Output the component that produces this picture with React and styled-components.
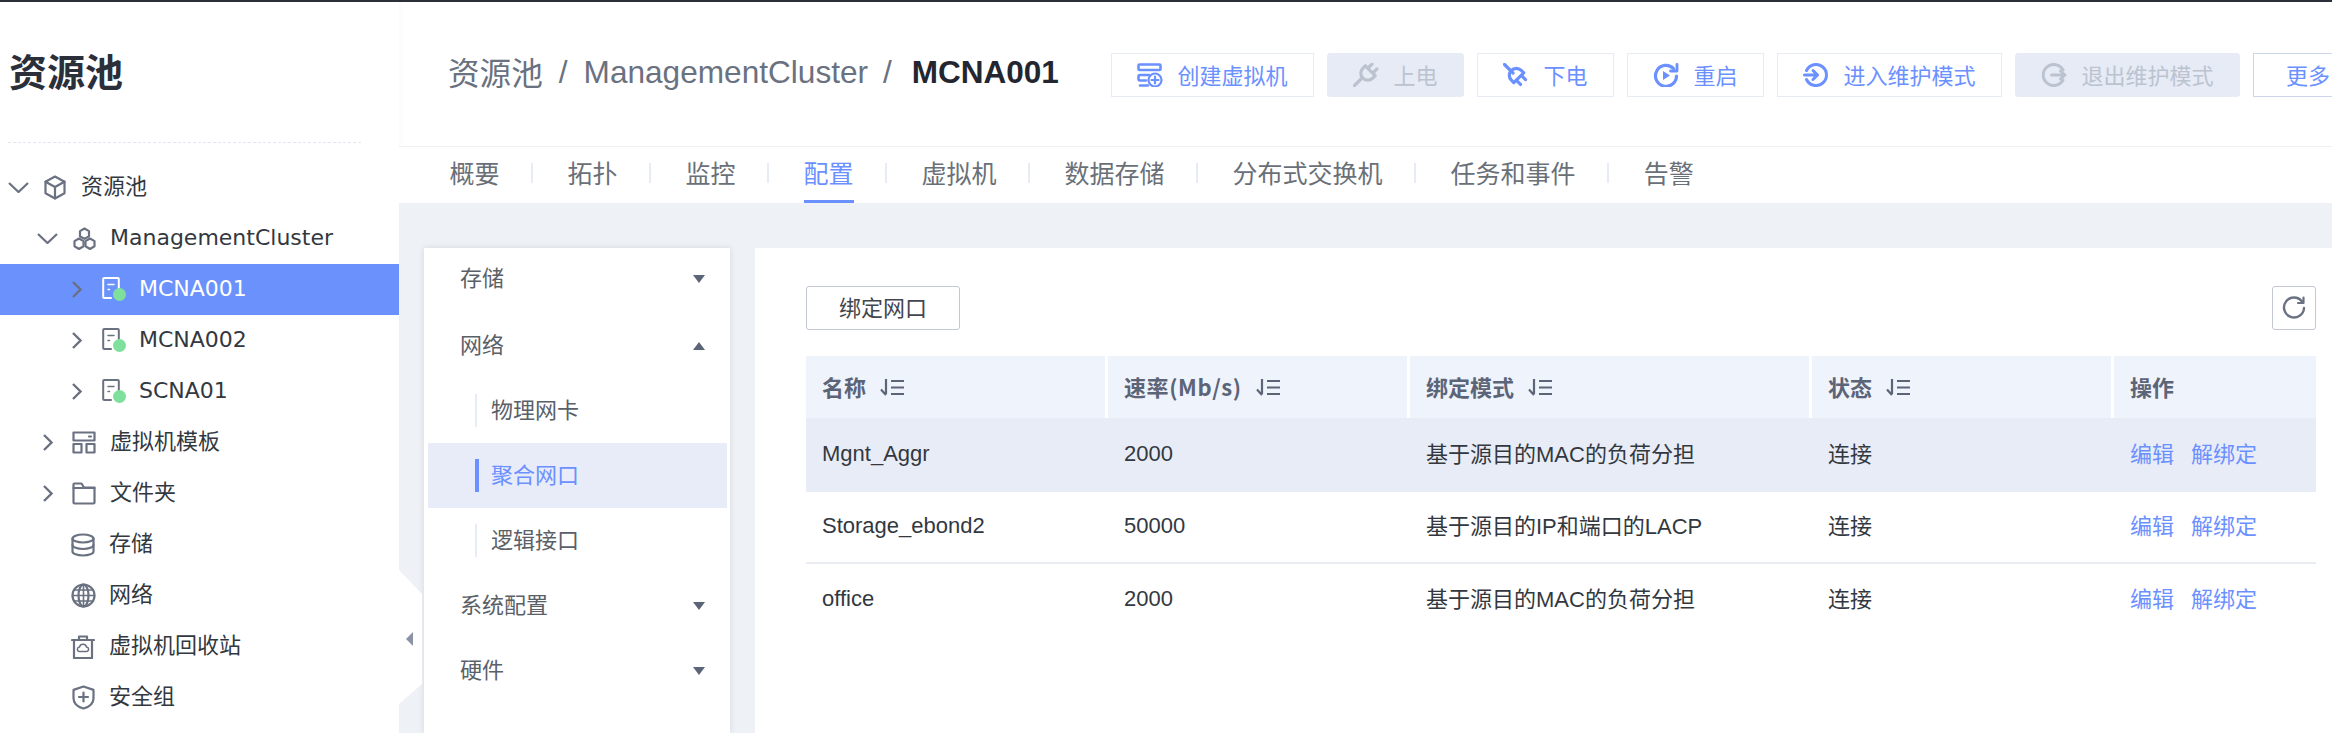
import React from 'react';
import styled, { createGlobalStyle } from 'styled-components';

const Global = createGlobalStyle`
  html, body { margin: 0; padding: 0; background: #fff; }
  * { box-sizing: border-box; }
  body { font-family: "Liberation Sans", "Noto Sans CJK SC", sans-serif; overflow: hidden; }
`;

const Page = styled.div`width: 2332px; height: 733px; overflow: hidden; display: flex; flex-direction: column;`;
const TopStrip = styled.div`height: 2px; background: #2b2f3a; flex: none;`;
const Body = styled.div`flex: 1; display: flex; min-height: 0; position: relative;`;

const Sidebar = styled.aside`width: 399px; flex: none; background: #fff; display: flex; flex-direction: column;`;
const SideTitle = styled.h1`
  margin: 0; height: 140px; padding: 0 0 6px 9px; display: flex; align-items: center;
  font: 700 38px "Noto Sans CJK SC", sans-serif; color: #2b2f3a;
`;
const Dashed = styled.div`margin: 0 0 19px 8px; width: 353px; border-top: 1px dashed #e4e7f1;`;
const TreeRow = styled.div`
  height: 51px; display: flex; align-items: center; padding-left: ${p => p.$indent}px;
  background: ${p => (p.$selected ? '#6b91fc' : 'transparent')};
  color: ${p => (p.$selected ? '#fff' : '#33383f')};
  font: 400 22px "DejaVu Sans", "Noto Sans CJK SC", sans-serif;
`;
const TreeLabel = styled.span`margin-bottom: ${p => (p.$latin ? 2 : 8)}px; white-space: nowrap;`;
const ChevronSlot = styled.span`width: 21px; height: 24px; display: flex; align-items: center; justify-content: center; flex: none;`;
const IconSlot = styled.span`width: 52px; height: 30px; display: flex; align-items: center; justify-content: center; flex: none; position: relative; color: ${p => (p.$selected ? '#fff' : '#6a7180')};`;
const HostGlyph = styled.span`display: flex; margin-right: 4px; margin-bottom: 3px;`;
const StatusDot = styled.i`position: absolute; width: 13px; height: 13px; border-radius: 50%; background: #7ee09c; left: 26px; top: 13px;`;
const Handle = styled.svg`position: absolute; left: 399px; top: 568px;`;

const Main = styled.main`flex: 1; min-width: 0; display: flex; flex-direction: column;`;
const Header = styled.header`height: 145px; flex: none; padding: 51px 0 0 49px; display: flex; align-items: flex-start; border-bottom: 1px solid #eff0f3; overflow: hidden; box-shadow: inset 6px 0 6px -6px rgba(40,50,70,.04);`;
const Crumbs = styled.div`flex: 0 0 663px; height: 38px; display: flex; align-items: center; font-size: 31.6px; color: #6a7180; white-space: nowrap;`;
const CrumbCjk = styled.span`margin-bottom: 3px;`;
const Slash = styled.span`margin: 0 ${p => p.$r}px 0 ${p => p.$l}px;`;
const Current = styled.b`color: #23262f; font-size: 31.5px;`;
const Actions = styled.div`display: flex; gap: 13px; flex: none;`;
const ActionButton = styled.div`
  height: 44px; flex: none; display: flex; align-items: center; gap: 14.5px; padding: 0 ${p => (p.$more ? 32 : 25.5)}px 0 ${p => (p.$more ? 32 : 25)}px;
  font-size: 22px; white-space: nowrap; border-radius: ${p => (p.$off ? 3 : 0)}px;
  border: 1px solid ${p => (p.$off ? '#e6ebf5' : p.$more ? '#ccd6ea' : '#e6ebf5')};
  background: ${p => (p.$off ? '#e6ebf5' : '#fff')};
  color: ${p => (p.$off ? '#bcc3d0' : '#6b90ff')};
`;
const ActionLabel = styled.span`margin-bottom: 3px;`;

const Tabs = styled.nav`height: 56px; flex: none; display: flex; padding-left: 50.5px; background: #fff;`;
const Tab = styled.div`
  height: 56px; padding-bottom: 3px; display: flex; align-items: center; font-size: 25px; white-space: nowrap;
  color: ${p => (p.$active ? '#6b90ff' : '#6a7078')};
  border-bottom: 3px solid ${p => (p.$active ? '#6b90ff' : 'transparent')};
`;
const TabSep = styled.span`width: 2px; height: 20px; margin: 16px 35px 0 31px; background: #e6ebf5; flex: none;`;

const Content = styled.div`flex: 1; min-height: 0; background: #eef1f5; display: flex; gap: 25px; padding: 45px 0 0 25px;`;
const Menu = styled.div`width: 306px; flex: none; background: #fff; box-shadow: 0 0 6px rgba(60,70,90,.14); padding: 0 3px 0 4px;`;
const MenuRow = styled.div`
  height: 65px; display: flex; align-items: center; justify-content: space-between; padding: ${p => (p.$first ? '0 22px 4px 32px' : '0 22px 0 32px')};
  font-size: 22px; color: #5a6068;
`;
const MenuLabel = styled.span`margin-bottom: 5px;`;
const SubRow = styled.div`
  height: 65px; display: flex; align-items: center; position: relative;
  font-size: 22px; background: ${p => (p.$active ? '#e8ecf8' : 'transparent')}; color: ${p => (p.$active ? '#6b90ff' : '#5a6068')};
`;
const SubMark = styled.span`
  position: absolute; top: 16px; height: 33px; left: 47px; width: ${p => (p.$active ? 4 : 2)}px;
  background: ${p => (p.$active ? '#6b90ff' : '#e6ebf5')};
`;
const SubLabel = styled.span`margin: 0 0 5px 63px;`;
const Caret = styled.i`
  width: 0; height: 0; border-left: 6px solid transparent; border-right: 6px solid transparent;
  ${p => (p.$up ? 'border-bottom' : 'border-top')}: 8px solid #5c6478;
`;

const Panel = styled.section`flex: 1; min-width: 0; background: #fff; padding: 38px 16px 0 51px;`;
const Toolbar = styled.div`display: flex; justify-content: space-between; margin-bottom: 26px;`;
const BindButton = styled.div`width: 154px; height: 44px; padding-bottom: 4px; border: 1px solid #c3c8d3; border-radius: 3px; display: flex; align-items: center; justify-content: center; font-size: 22px; color: #42464e;`;
const RefreshButton = styled.div`width: 44px; height: 44px; border: 1px solid #c3c8d3; border-radius: 3px; display: flex; align-items: center; justify-content: center; color: #6a7180;`;

const cols = '302px 302px 402px 302px 202px';
const HeadRow = styled.div`display: grid; grid-template-columns: ${cols}; height: 62px;`;
const HeadCell = styled.div`
  background: #eff3fb; display: flex; align-items: center; gap: 14px; padding-left: 16px; white-space: nowrap;
  font: 700 22px "Noto Sans CJK SC", sans-serif; color: #5c6478;
  border-right: ${p => (p.$last ? 0 : 3)}px solid #fff;
`;
const HeadLabel = styled.span`margin-bottom: 3px; letter-spacing: ${p => p.$spread || 0}px;`;
const DataRow = styled.div`
  display: grid; grid-template-columns: ${cols}; height: ${p => p.$h}px;
  background: ${p => (p.$active ? '#e8ecf7' : '#fff')};
  border-bottom: ${p => (p.$line ? '2px solid #eaecf3' : '0')};
`;
const Cell = styled.div`display: flex; align-items: center; padding: 0 0 ${p => (p.$cjk ? 6 : 2)}px 16px; font-size: 22px; color: #33383f; white-space: nowrap; gap: 17px;`;
const Link = styled.span`color: #6b90ff;`;

const Svg = ({ w = 26, h = 24, vb, sw = 2, children }) => (
  <svg width={w} height={h} viewBox={vb || `0 0 ${w} ${h}`} fill="none" stroke="currentColor" strokeWidth={sw} strokeLinecap="round" strokeLinejoin="round">{children}</svg>
);

const Chevron = ({ open }) => open
  ? <svg width="21" height="11" viewBox="0 0 21 11" fill="none" stroke="#6a7180" strokeWidth="2.2"><path d="M1 1l9.5 9L20 1" /></svg>
  : <svg width="10" height="17" viewBox="0 0 10 17" fill="none" stroke="#6a7180" strokeWidth="2.4"><path d="M1 1l7.5 7.5L1 16" /></svg>;

const BoxIcon = () => <Svg w={22} h={25} sw={2.2}><path d="M11 1.5l9.5 5.2v11.6L11 23.5 1.5 18.3V6.7z" /><path d="M1.5 6.7L11 12l9.5-5.3M11 12v11.5" /></Svg>;
const ClusterIcon = () => <Svg w={25} h={24} sw={2.2}><path d="M12.5 1.5l4.5 2.6v5.2l-4.5 2.6L8 9.3V4.1z" /><path d="M7 11.5l4.5 2.6v5.2L7 22l-4.5-2.7v-5.2z" /><path d="M18 11.5l4.5 2.6v5.2L18 22l-4.5-2.7v-5.2z" /></Svg>;
const HostIcon = () => <HostGlyph><Svg w={18} h={22}><path d="M9 21H2.2a1 1 0 0 1-1-1V2a1 1 0 0 1 1-1h13.6a1 1 0 0 1 1 1v9" /><path d="M6 7.500h6" strokeWidth="1.5" /><path d="M6 12.500h1.500" strokeWidth="1.5" /></Svg></HostGlyph>;
const TemplateIcon = () => <Svg w={24} h={23} sw={2.2}><rect x="1.5" y="1.5" width="21" height="8" /><path d="M17 5.5h2" /><rect x="1.5" y="13" width="8" height="8.5" /><rect x="14.5" y="13" width="8" height="8.5" /></Svg>;
const FolderIcon = () => <Svg w={24} h={23} sw={2.2}><path d="M1.5 20.500V2.5a1 1 0 0 1 1-1h7l2.5 4h10.5v15a1 1 0 0 1-1 1H2.5a1 1 0 0 1-1-1z" /><path d="M1.5 6h21" /></Svg>;
const DbIcon = () => <Svg w={24} h={24} sw={2.2}><ellipse cx="12" cy="5.5" rx="10.5" ry="4" /><path d="M1.5 5.5v13c0 2.2 4.7 4 10.5 4s10.5-1.8 10.5-4v-13" /><path d="M1.5 12c0 2.2 4.7 4 10.5 4s10.5-1.8 10.5-4" /></Svg>;
const GlobeIcon = () => <Svg w={25} h={25} sw={2.2}><circle cx="12.5" cy="12.5" r="11" /><ellipse cx="12.5" cy="12.5" rx="5" ry="11" /><path d="M1.5 12.5h22M3.2 7h18.6M3.2 18h18.6M12.5 1.5v22" strokeWidth="1.6" /></Svg>;
const BinIcon = () => <Svg w={24} h={24} sw={2.2}><path d="M1 5h22M8 5V1.5h8V5" /><path d="M3 5v18h18V5" /><path d="M8 16.5a2.3 2.3 0 0 1 .5-4.5 3.6 3.6 0 0 1 7 0 2.3 2.3 0 0 1 .5 4.5z" strokeWidth="1.5" /></Svg>;
const ShieldIcon = () => <Svg w={23} h={25} sw={2.2}><path d="M11.500 1.500l10 3.400v8.300c0 5-4 8.600-10 10.300-6-1.700-10-5.300-10-10.300V4.900z" /><path d="M11.500 7.500v9M7 12h9" /></Svg>;

const Plug = ({ angle, cx, cy, cord }) => (
  <Svg sw={3.2}>
    <path d={cord} />
    <g transform={`translate(${cx} ${cy}) rotate(${angle})`}>
      <path d="M-7 -2.500H7V1A7 7 0 0 1 -7 1z" />
      <path d="M-3.500 -3V-8.500M3.500 -3V-8.500" />
    </g>
  </Svg>
);
const CreateIcon = () => <Svg sw={2.600}><rect x="1.500" y="1.500" width="22" height="5.500" rx="1" /><path d="M12 12H3a1.500 1.500 0 0 0-1.500 1.500V16A1.500 1.500 0 0 0 3 17.500h6M3 22.500h8" /><circle cx="18" cy="17" r="6.500" strokeWidth="2.200" /><path d="M18 13.500v7M14.500 17h7" strokeWidth="2.200" /></Svg>;
const RestartIcon = () => <Svg><path d="M20.500 5.500A10.500 10.500 0 1 0 23.500 13" strokeWidth="3.200" /><path d="M24 1.500V8h-6.500" strokeWidth="2.800" /><path d="M10 8l7 4.500L10 17z" fill="currentColor" stroke="none" /></Svg>;
const EnterIcon = () => <Svg sw={3}><path d="M3.500 7.500a10.500 10.500 0 1 1 0 9" /><path d="M1.500 12h13M10 7.500l4.500 4.500-4.500 4.500" /></Svg>;
const ExitIcon = () => <Svg sw={3}><path d="M22 7a10.500 10.500 0 1 0 0 10" /><path d="M10.500 12h13M19.500 8l4.500 4-4.500 4" /></Svg>;

const SortIcon = () => (
  <svg width="24" height="17" viewBox="0 0 24 17" fill="none" stroke="#5c6478" strokeWidth="2.200"><path d="M6 0v15M1 10.500L6 16" /><path d="M11 2h13M11 8.500h13M11 15h13" /></svg>
);

const tree = [
  { t: '资源池', indent: 8, chev: 'open', icon: <BoxIcon /> },
  { t: 'ManagementCluster', indent: 37, chev: 'open', icon: <ClusterIcon />, latin: true },
  { t: 'MCNA001', indent: 66, chev: 'closed', icon: <HostIcon />, dot: true, selected: true, latin: true },
  { t: 'MCNA002', indent: 66, chev: 'closed', icon: <HostIcon />, dot: true, latin: true },
  { t: 'SCNA01', indent: 66, chev: 'closed', icon: <HostIcon />, dot: true, latin: true },
  { t: '虚拟机模板', indent: 37, chev: 'closed', icon: <TemplateIcon /> },
  { t: '文件夹', indent: 37, chev: 'closed', icon: <FolderIcon /> },
  { t: '存储', indent: 57, icon: <DbIcon /> },
  { t: '网络', indent: 57, icon: <GlobeIcon /> },
  { t: '虚拟机回收站', indent: 57, icon: <BinIcon /> },
  { t: '安全组', indent: 57, icon: <ShieldIcon /> },
];

const actions = [
  { t: '创建虚拟机', icon: <CreateIcon /> },
  { t: '上电', off: true, icon: <Plug angle={45} cx={15.500} cy={9.500} cord="M1.500 22.500L9 15" /> },
  { t: '下电', icon: <Plug angle={135} cx={14} cy={13} cord="M1.500 1.500L10 10" /> },
  { t: '重启', icon: <RestartIcon /> },
  { t: '进入维护模式', icon: <EnterIcon /> },
  { t: '退出维护模式', off: true, icon: <ExitIcon /> },
];

const tabs = ['概要', '拓扑', '监控', '配置', '虚拟机', '数据存储', '分布式交换机', '任务和事件', '告警'];
const heads = [['名称', true], ['速率(Mb/s)', true, 0.6], ['绑定模式', true], ['状态', true], ['操作', false]];
const rows = [
  { h: 74, active: true, c: ['Mgnt_Aggr', '2000', '基于源目的MAC的负荷分担', '连接'] },
  { h: 72, line: true, c: ['Storage_ebond2', '50000', '基于源目的IP和端口的LACP', '连接'] },
  { h: 72, c: ['office', '2000', '基于源目的MAC的负荷分担', '连接'] },
];

export default function App() {
  return (
    <Page>
      <Global />
      <TopStrip />
      <Body>
        <Sidebar>
          <SideTitle>资源池</SideTitle>
          <Dashed />
          {tree.map(n => (
            <TreeRow key={n.t} $indent={n.indent} $selected={n.selected}>
              {n.chev && <ChevronSlot><Chevron open={n.chev === 'open'} /></ChevronSlot>}
              <IconSlot $selected={n.selected}>{n.icon}{n.dot && <StatusDot />}</IconSlot>
              <TreeLabel $latin={n.latin}>{n.t}</TreeLabel>
            </TreeRow>
          ))}
        </Sidebar>
        <Main>
          <Header>
            <Crumbs>
              <CrumbCjk>资源池</CrumbCjk><Slash $l={16} $r={16}>/</Slash>ManagementCluster<Slash $l={15} $r={20}>/</Slash><Current>MCNA001</Current>
            </Crumbs>
            <Actions>
              {actions.map(a => (
                <ActionButton key={a.t} $off={a.off}>{a.icon}<ActionLabel>{a.t}</ActionLabel></ActionButton>
              ))}
              <ActionButton $more><ActionLabel>更多</ActionLabel></ActionButton>
            </Actions>
          </Header>
          <Tabs>
            {tabs.map((t, i) => (
              <React.Fragment key={t}>
                <Tab $active={t === '配置'}>{t}</Tab>
                {i < tabs.length - 1 && <TabSep />}
              </React.Fragment>
            ))}
          </Tabs>
          <Content>
            <Menu>
              <MenuRow $first><MenuLabel>存储</MenuLabel><Caret /></MenuRow>
              <MenuRow><MenuLabel>网络</MenuLabel><Caret $up /></MenuRow>
              <SubRow><SubMark /><SubLabel>物理网卡</SubLabel></SubRow>
              <SubRow $active><SubMark $active /><SubLabel>聚合网口</SubLabel></SubRow>
              <SubRow><SubMark /><SubLabel>逻辑接口</SubLabel></SubRow>
              <MenuRow><MenuLabel>系统配置</MenuLabel><Caret /></MenuRow>
              <MenuRow><MenuLabel>硬件</MenuLabel><Caret /></MenuRow>
            </Menu>
            <Panel>
              <Toolbar>
                <BindButton>绑定网口</BindButton>
                <RefreshButton>
                  <Svg w={24} h={24}><path d="M20 5.500A10 10 0 1 0 22 12" strokeWidth="2.400" /><path d="M21.500 1.500V7H16" strokeWidth="2.200" /></Svg>
                </RefreshButton>
              </Toolbar>
              <HeadRow>
                {heads.map(([t, s, spread], i) => (
                  <HeadCell key={t} $last={i === heads.length - 1}><HeadLabel $spread={spread}>{t}</HeadLabel>{s && <SortIcon />}</HeadCell>
                ))}
              </HeadRow>
              {rows.map(r => (
                <DataRow key={r.c[0]} $h={r.h} $active={r.active} $line={r.line}>
                  {r.c.map((v, i) => <Cell key={i} $cjk={i >= 2}>{v}</Cell>)}
                  <Cell $cjk><Link>编辑</Link><Link>解绑定</Link></Cell>
                </DataRow>
              ))}
            </Panel>
          </Content>
        </Main>
        <Handle width="24" height="136" viewBox="0 0 24 136">
          <path d="M0 0L23 24V114L0 134z" fill="#fff" />
          <path d="M14 62v14l-7-7z" fill="#8a93a6" />
        </Handle>
      </Body>
    </Page>
  );
}
